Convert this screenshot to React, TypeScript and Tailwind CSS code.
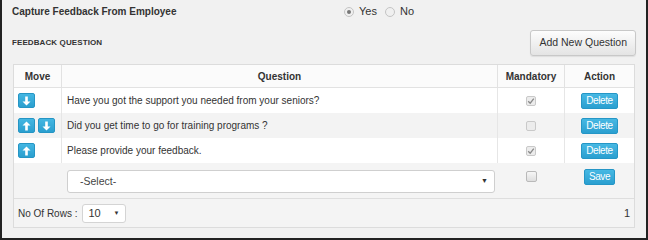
import React from 'react'

const rows = [
  { text: 'Have you got the support you needed from your seniors?', up: false, down: true, checked: true },
  { text: 'Did you get time to go for training programs ?', up: true, down: true, checked: false },
  { text: 'Please provide your feedback.', up: true, down: false, checked: true },
]

const Arrow = ({ dir }: { dir: 'up' | 'down' }) => (
  <button className="w-[17px] h-[15px] rounded-[2px] bg-gradient-to-b from-[#43b6e2] to-[#2a9fcf] border border-[#2595c4] flex items-center justify-center">
    <svg width="9" height="10" viewBox="0 0 9 10" className={dir === 'up' ? '' : 'rotate-180'}>
      <path d="M4.5 0.5 L8.5 4.5 L5.8 4.5 L5.8 9.5 L3.2 9.5 L3.2 4.5 L0.5 4.5 Z" fill="#fff" />
    </svg>
  </button>
)

const Check = ({ checked }: { checked: boolean }) => (
  <span className="inline-flex w-[10px] h-[10px] rounded-[2px] border border-[#c9c9c9] bg-[#ececec] items-center justify-center">
    {checked && (
      <svg width="8" height="8" viewBox="0 0 8 8">
        <path d="M1.2 4.2 L3.2 6.2 L6.8 1.6" stroke="#8a8a8a" strokeWidth="1.3" fill="none" />
      </svg>
    )}
  </span>
)

const BlueBtn = ({ label }: { label: string }) => (
  <button className="h-[16px] px-[4px] rounded-[2px] bg-gradient-to-b from-[#46b8e3] to-[#2a9fd0] border border-[#2596c6] text-white text-[10px] leading-none tracking-[-0.4px]">
    {label}
  </button>
)

export default function App() {
  return (
    <div className="w-[648px] h-[240px] bg-[#f1f1f1] border-l-2 border-r-2 border-b-2 border-[#222] text-[#333] font-['Liberation_Sans',Arial,sans-serif] overflow-hidden">
      <div className="flex items-center h-[23px] pl-[10px]">
        <div className="w-[332px] text-[10px] font-bold">Capture Feedback From Employee</div>
        <label className="flex items-center gap-[5px] text-[11px]">
          <span className="w-[10px] h-[10px] rounded-full border border-[#c4c4c4] bg-[#f0f0f0] flex items-center justify-center">
            <span className="w-[4px] h-[4px] rounded-full bg-[#777]" />
          </span>
          Yes
        </label>
        <label className="flex items-center gap-[5px] text-[11px] ml-[8px]">
          <span className="w-[10px] h-[10px] rounded-full border border-[#c4c4c4] bg-[#f0f0f0]" />
          No
        </label>
      </div>

      <div className="flex items-center justify-between pl-[10px] pr-[10px] mt-[7px] h-[26px]">
        <div className="text-[8px] font-bold tracking-[0.1px]">FEEDBACK QUESTION</div>
        <button className="h-[26px] px-[8px] rounded-[3px] border border-[#c8c8c8] bg-gradient-to-b from-[#fdfdfd] to-[#e4e4e4] text-[10.5px] text-[#333] shadow-[0_1px_1px_rgba(0,0,0,0.08)]">
          Add New Question
        </button>
      </div>

      <div className="mx-[11px] mt-[8px] border border-[#dcdcdc] bg-[#f4f4f4]">
        <div className="grid grid-cols-[48px_436px_67px_1fr] h-[23px] bg-[#fbfbfb] text-[10px] font-bold border-b border-[#e2e2e2]">
          <div className="flex items-center justify-center border-r border-[#e2e2e2]">Move</div>
          <div className="flex items-center justify-center border-r border-[#e2e2e2]">Question</div>
          <div className="flex items-center justify-center border-r border-[#e2e2e2]">Mandatory</div>
          <div className="flex items-center justify-center">Action</div>
        </div>
        {rows.map((r, i) => (
          <div
            key={i}
            className={`grid grid-cols-[48px_436px_67px_1fr] h-[25px] text-[10px] ${i % 2 === 1 ? 'bg-[#f3f3f3]' : 'bg-white'}`}
          >
            <div className="flex items-center gap-[3px] pl-[4px] border-r border-[#e6e6e6]">
              {r.up && <Arrow dir="up" />}
              {r.down && <Arrow dir="down" />}
            </div>
            <div className="flex items-center pl-[5px] border-r border-[#e6e6e6]">{r.text}</div>
            <div className="flex items-center justify-center border-r border-[#e6e6e6]">
              <Check checked={r.checked} />
            </div>
            <div className="flex items-center justify-center">
              <BlueBtn label="Delete" />
            </div>
          </div>
        ))}
        <div className="grid grid-cols-[48px_436px_67px_1fr] h-[36px] bg-[#f4f4f4] border-b border-[#dedede]">
          <div />
          <div className="flex items-start pt-[7px] pl-[5px] pr-[3px]">
            <div className="flex-1 h-[23px] rounded-[3px] border border-[#cfcfcf] bg-white flex items-center justify-between pl-[12px] pr-[6px] text-[10.5px] text-[#444]">
              -Select-
              <span className="text-[7px] text-[#333]">▼</span>
            </div>
          </div>
          <div className="flex items-start justify-center pt-[8px]">
            <span className="w-[11px] h-[11px] rounded-[2px] border border-[#b9b9b9] bg-gradient-to-b from-[#f6f6f6] to-[#dedede]" />
          </div>
          <div className="flex items-start justify-center pt-[6px]">
            <BlueBtn label="Save" />
          </div>
        </div>
        <div className="flex items-center justify-between h-[28px] pl-[4px] pr-[4px] text-[10px]">
          <div className="flex items-center gap-[5px]">
            <span>No Of Rows :</span>
            <div className="w-[44px] h-[19px] rounded-[3px] border border-[#d4d4d4] bg-white flex items-center justify-between pl-[5px] pr-[6px] text-[11px]">
              10
              <span className="text-[6px]">▼</span>
            </div>
          </div>
          <span className="text-[11px]">1</span>
        </div>
      </div>
    </div>
  )
}
